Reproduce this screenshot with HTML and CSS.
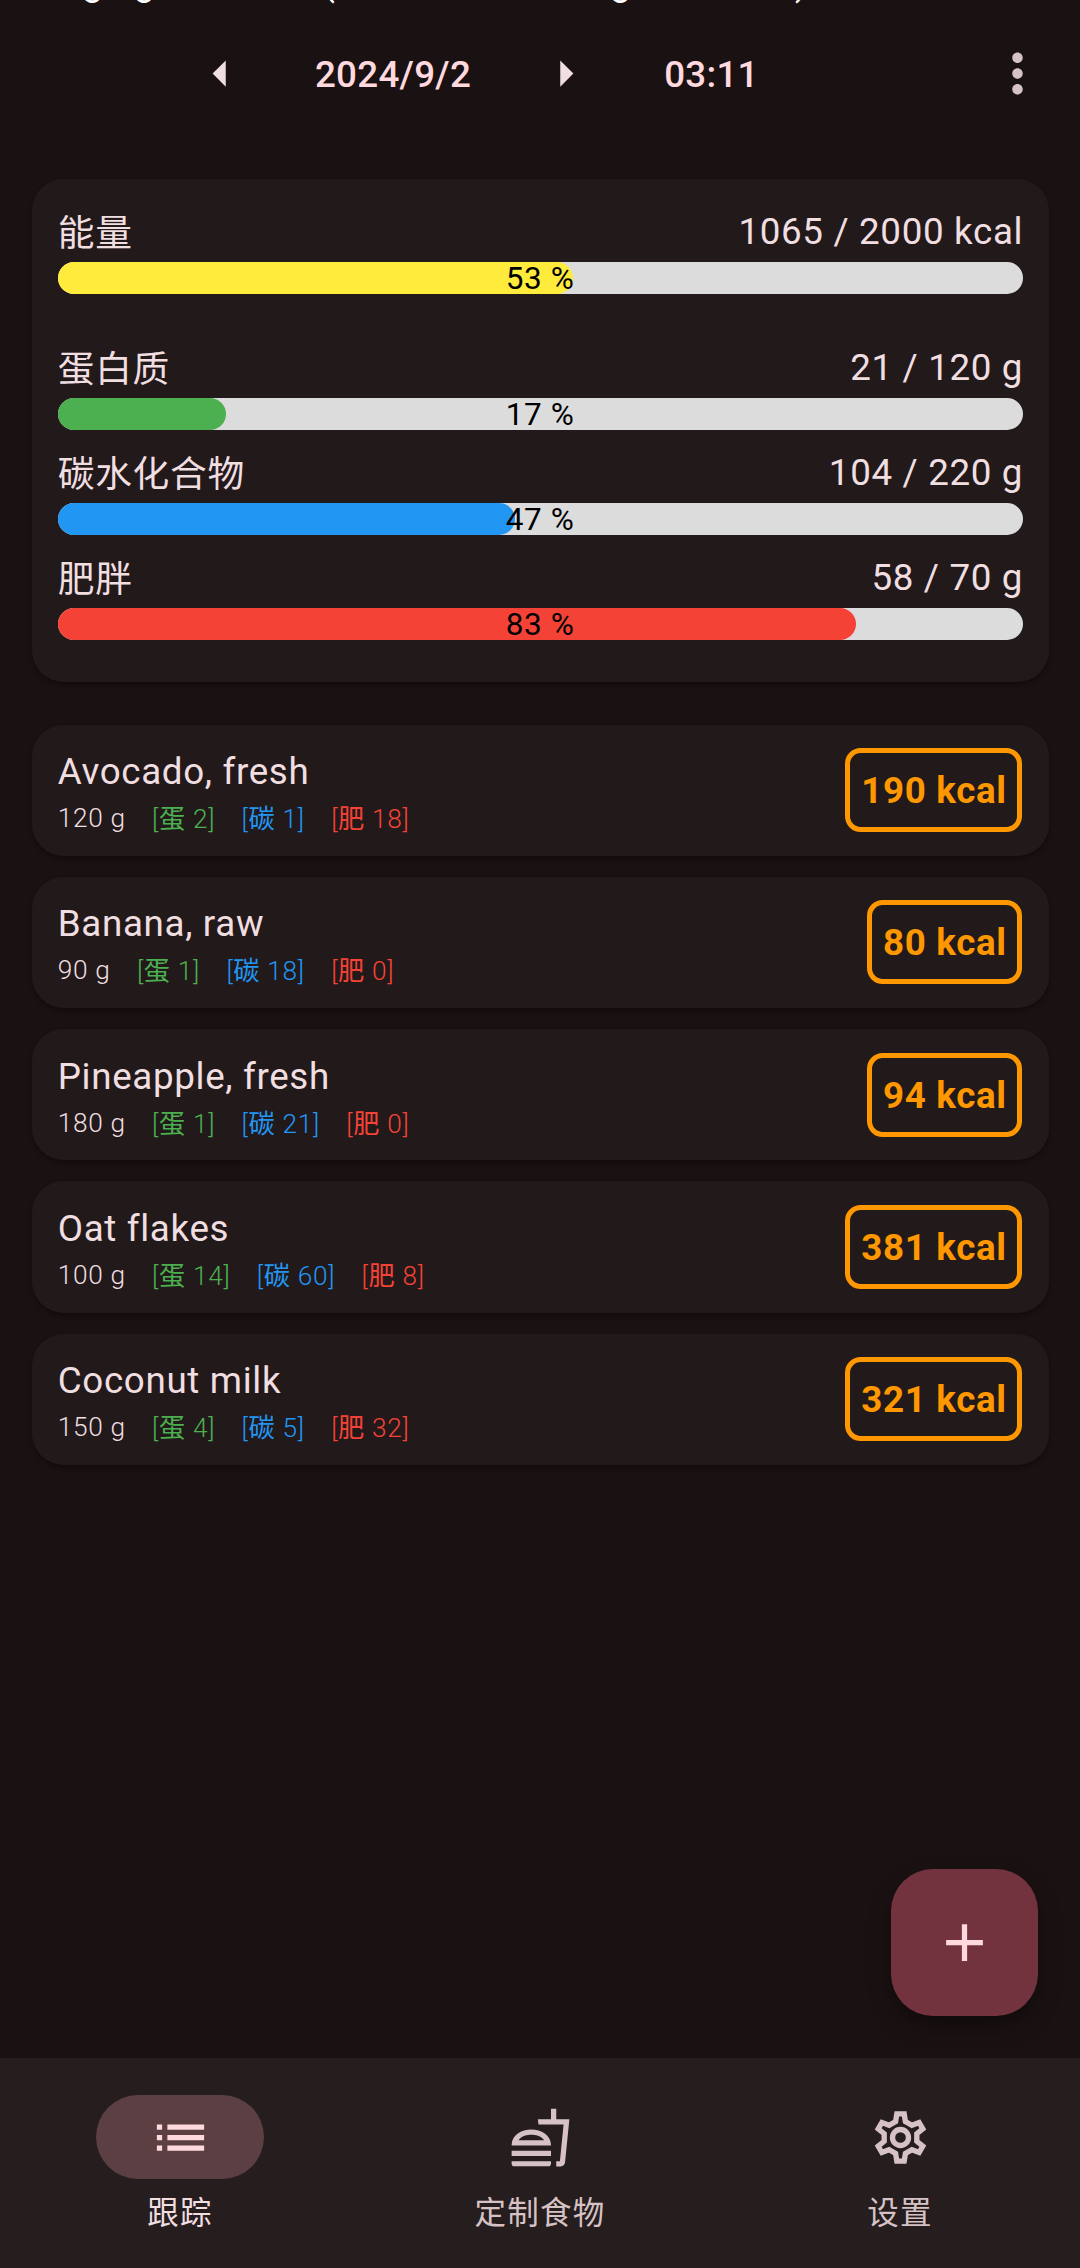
FILE: index.html
```html
<!DOCTYPE html>
<html lang="zh-CN">
<head>
<meta charset="utf-8">
<title>跟踪</title>
<link rel="stylesheet" href="styles.css">
</head>
<body>
<div class="screen">
  <header class="topbar">
    <div class="clipped">Bringing the units (calories and weight in kilos)</div>
    <button class="arrow prev" aria-label="prev"><svg viewBox="0 0 24 24"><path d="M14 7l-5 5 5 5V7z"/></svg></button>
    <span class="date">2024/9/2</span>
    <button class="arrow next" aria-label="next"><svg viewBox="0 0 24 24"><path d="M10 17l5-5-5-5v10z"/></svg></button>
    <span class="time">03:11</span>
    <button class="more" aria-label="more"><svg viewBox="0 0 24 24"><path d="M12 8c1.100 0 2-.9 2-2s-.9-2-2-2-2 .9-2 2 .9 2 2 2zm0 2c-1.100 0-2 .9-2 2s.9 2 2 2 2-.9 2-2-.9-2-2-2zm0 6c-1.100 0-2 .9-2 2s.9 2 2 2 2-.9 2-2-.9-2-2-2z"/></svg></button>
  </header>

  <section class="card summary">
    <div class="metric energy"><div class="row"><span class="name">能量</span><span class="amount">1065 / 2000 kcal</span></div><div class="bar"><i class="fill yellow" style="width:53.4%"></i><b class="pct">53 %</b></div></div>
    <div class="metric"><div class="row"><span class="name">蛋白质</span><span class="amount">21 / 120 g</span></div><div class="bar"><i class="fill green" style="width:17.4%"></i><b class="pct">17 %</b></div></div>
    <div class="metric"><div class="row"><span class="name">碳水化合物</span><span class="amount">104 / 220 g</span></div><div class="bar"><i class="fill blue" style="width:47.4%"></i><b class="pct">47 %</b></div></div>
    <div class="metric"><div class="row"><span class="name">肥胖</span><span class="amount">58 / 70 g</span></div><div class="bar"><i class="fill red" style="width:82.7%"></i><b class="pct">83 %</b></div></div>
  </section>

  <main class="foods">
    <article class="card food"><div class="info"><h2>Avocado, fresh</h2><p><span>120 g</span><span class="p">[<em>蛋</em> 2]</span><span class="c">[<em>碳</em> 1]</span><span class="f">[<em>肥</em> 18]</span></p></div><span class="kcal">190 kcal</span></article>
    <article class="card food"><div class="info"><h2>Banana, raw</h2><p><span>90 g</span><span class="p">[<em>蛋</em> 1]</span><span class="c">[<em>碳</em> 18]</span><span class="f">[<em>肥</em> 0]</span></p></div><span class="kcal">80 kcal</span></article>
    <article class="card food"><div class="info"><h2>Pineapple, fresh</h2><p><span>180 g</span><span class="p">[<em>蛋</em> 1]</span><span class="c">[<em>碳</em> 21]</span><span class="f">[<em>肥</em> 0]</span></p></div><span class="kcal">94 kcal</span></article>
    <article class="card food"><div class="info"><h2>Oat flakes</h2><p><span>100 g</span><span class="p">[<em>蛋</em> 14]</span><span class="c">[<em>碳</em> 60]</span><span class="f">[<em>肥</em> 8]</span></p></div><span class="kcal">381 kcal</span></article>
    <article class="card food"><div class="info"><h2>Coconut milk</h2><p><span>150 g</span><span class="p">[<em>蛋</em> 4]</span><span class="c">[<em>碳</em> 5]</span><span class="f">[<em>肥</em> 32]</span></p></div><span class="kcal">321 kcal</span></article>
  </main>

  <button class="fab" aria-label="add"><svg viewBox="0 0 24 24"><path d="M19 13h-6v6h-2v-6H5v-2h6V5h2v6h6v2z"/></svg></button>

  <nav class="nav">
    <a class="tab active"><span class="pill"><svg viewBox="0 0 24 24"><path d="M3 13h2v-2H3v2zm0 4h2v-2H3v2zm0-8h2V7H3v2zm4 4h14v-2H7v2zm0 4h14v-2H7v2zM7 7v2h14V7H7z"/></svg></span><span class="label">跟踪</span></a>
    <a class="tab"><span class="pill"><svg viewBox="0 0 24 24"><path d="M8.500 8.990C4.750 8.990 1 11 1 15h15c0-4-3.750-6.010-7.500-6.010zM3.620 13c1.110-1.550 3.470-2.010 4.880-2.010s3.770.46 4.880 2.010H3.620zM1 17h15v2H1zM1 21h15v.98c0 .56-.45 1.010-1.010 1.010H2.010C1.450 22.990 1 22.540 1 21.980zM18 5V1h-2v4h-5l.23 2h9.560l-1.400 14H18v2h1.720c.84 0 1.530-.65 1.630-1.470L23 5z"/></svg></span><span class="label">定制食物</span></a>
    <a class="tab"><span class="pill"><svg class="gear" viewBox="-94.5 -94.5 189 189"><path d="M-11.100-71H11.100L14.700-48L34.200-36.700L55.900-45.100L67-25.900L48.900-11.300V11.300L67 25.900L55.900 45.100L34.200 36.700L14.700 48L11.100 71H-11.100L-14.700 48L-34.200 36.700L-55.900 45.100L-67 25.900L-48.900 11.300V-11.300L-67-25.900L-55.900-45.100L-34.200-36.700L-14.700-48Z"/><circle r="24"/></svg></span><span class="label">设置</span></a>
  </nav>
</div>
</body>
</html>
```
FILE: styles.css
```css
* { box-sizing: border-box; margin: 0; padding: 0; }
body { background: #1a1112; }
.screen {
  position: relative;
  display: flex;
  flex-direction: column;
  width: 1080px;
  height: 2268px;
  overflow: hidden;
  background: #1a1112;
  color: #f0dee0;
  font-family: Roboto, "Noto Sans CJK SC", sans-serif;
  font-size: 36.75px;
  letter-spacing: 0.66px;
}
button { border: 0; background: none; color: inherit; }
svg { display: block; width: 63px; height: 63px; fill: currentColor; }

.topbar {
  position: relative;
  display: grid;
  grid-template-columns: 189px 63px 282px 63px 229px 1fr;
  align-items: center;
  height: 147px;
  flex: none;
  color: #f0dee0;
}
.clipped {
  position: absolute;
  left: 15px;
  top: -39px;
  white-space: nowrap;
  line-height: 43px;
  color: #fff;
}
.arrow { grid-row: 1; }
.prev { grid-column: 2; }
.next { grid-column: 4; }
.date, .time { grid-row: 1; padding-top: 2px; text-align: center; font-weight: 500; color: #ffd9de; letter-spacing: 0.26px; }
.date { grid-column: 3; }
.time { grid-column: 5; }
.topbar .more { grid-column: 6; grid-row: 1; justify-self: end; margin-right: 31.5px; color: #d6c2c4; }

.card {
  margin: 0 31.5px;
  border-radius: 31.5px;
  background: #22191a;
  box-shadow: 0 3px 4px rgba(0, 0, 0, 0.3);
}
.summary { flex: none; height: 503px; margin-top: 32px; padding: 30px 26px 0 26.25px; }
.metric { height: 105px; }
.energy { height: 136px; }
.row { display: flex; justify-content: space-between; height: 53px; line-height: 46px; }
.name { padding-top: 2px; }
.amount { margin-right: -0.66px; }
.bar {
  position: relative;
  display: flex;
  justify-content: center;
  height: 32px;
  border-radius: 16px;
  background: #dcdcdc;
}
.fill { position: absolute; left: 0; top: 0; height: 100%; border-radius: 16px; }
.yellow { background: #ffeb3b; }
.green { background: #4caf50; }
.blue { background: #2196f3; }
.red { background: #f44336; }
.pct { position: relative; color: #000; font-size: 31.5px; line-height: 34px; font-weight: 400; }

.foods { display: flex; flex-direction: column; gap: 21px; margin-top: 42.5px; }
.food { display: flex; align-items: center; justify-content: space-between; height: 131.25px; padding: 0 26.25px; }
.info { padding-top: 4px; }
.info h2 { font-size: 36.75px; font-weight: 400; line-height: 52px; }
.info p { display: flex; gap: 26.4px; font-size: 26.25px; font-weight: 300; line-height: 40px; }
.info em { font-style: normal; font-weight: 400; }
.p, .c, .f { position: relative; top: 1px; }
.p { color: #4caf50; }
.c { color: #2196f3; }
.f { color: #f44336; }
.kcal {
  height: 84px;
  padding: 0 10.5px 0 11px;
  border: 5.25px solid #ff9800;
  border-radius: 15.75px;
  color: #ff9800;
  font-weight: 700;
  line-height: 75px;
}

.fab {
  position: absolute;
  left: 891px;
  top: 1869px;
  display: grid;
  place-items: center;
  width: 147px;
  height: 147px;
  border-radius: 42px;
  background: #72333f;
  color: #ffd9de;
  box-shadow: 0 10px 22px rgba(0, 0, 0, 0.35);
}

.nav { display: flex; height: 210px; margin-top: auto; background: #261d1e; color: #d6c2c4; }
.tab { flex: 1; display: flex; flex-direction: column; align-items: center; padding-top: 37px; }
.pill { display: grid; place-items: center; width: 168px; height: 84px; border-radius: 42px; }
.gear { fill: none; stroke: currentColor; stroke-width: 16; }
.active .pill { background: #5b3f42; color: #ffd9de; }
.active .label { color: #f0dee0; }
.label { margin-top: 12px; font-size: 31.5px; line-height: 46px; letter-spacing: 1.3px; }
```
